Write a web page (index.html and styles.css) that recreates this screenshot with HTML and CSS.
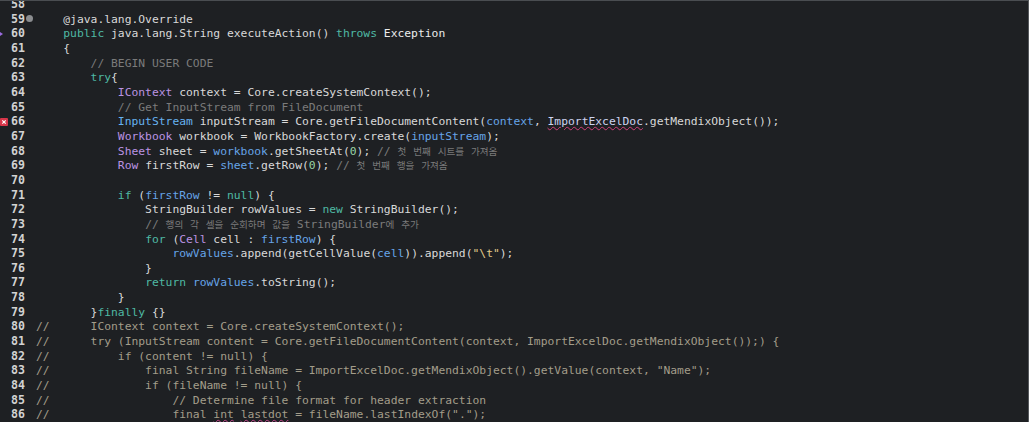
FILE: index.html
```html
<!DOCTYPE html>
<html>
<head>
<meta charset="utf-8">
<meta name="viewport" content="width=device-width, initial-scale=1.0">
<title>ImportExcel.java</title>
<link rel="stylesheet" href="styles.css">
</head>
<body>
  <div class="editor">
    <div class="lines">
      <div class="line"><div class="num">58</div><div class="mark"></div><div class="code"></div></div>
      <div class="line"><div class="num">59</div><div class="mark"><span class="override-dot"></span></div><div class="code">    @java.lang.Override</div></div>
      <div class="line"><div class="num"><span class="arrow"></span>60</div><div class="mark"></div><div class="code">    <span class="kw">public</span> java.lang.String executeAction() <span class="kw">throws</span> <span class="cls">Exception</span></div></div>
      <div class="line"><div class="num">61</div><div class="mark"></div><div class="code">    {</div></div>
      <div class="line"><div class="num">62</div><div class="mark"></div><div class="code">        <span class="cm">// BEGIN USER CODE</span></div></div>
      <div class="line"><div class="num">63</div><div class="mark"></div><div class="code">        <span class="kw">try</span>{</div></div>
      <div class="line"><div class="num">64</div><div class="mark"></div><div class="code">            <span class="iface">IContext</span> context = Core.createSystemContext();</div></div>
      <div class="line"><div class="num">65</div><div class="mark"></div><div class="code">            <span class="cm">// Get InputStream from FileDocument</span></div></div>
      <div class="line"><div class="num"><svg class="err" width="8" height="8" viewBox="0 0 8 8"><rect width="8" height="8" rx="1" fill="#d7364a"/><path d="M2.3 2.3l3.4 3.4M5.7 2.3l-3.4 3.4" stroke="#fff" stroke-width="1.2"/></svg>66</div><div class="mark"></div><div class="code">            <span class="abs">InputStream</span> inputStream = Core.getFileDocumentContent(<span class="var">context</span>, <span class="bad">ImportExcelDoc</span>.getMendixObject());</div></div>
      <div class="line"><div class="num">67</div><div class="mark"></div><div class="code">            <span class="iface">Workbook</span> workbook = WorkbookFactory.create(<span class="var">inputStream</span>);</div></div>
      <div class="line"><div class="num">68</div><div class="mark"></div><div class="code">            <span class="iface">Sheet</span> sheet = <span class="var">workbook</span>.getSheetAt(<span class="nb">0</span>); <span class="cm">// <span class="ko">첫</span> <span class="ko">번째</span> <span class="ko">시트를</span> <span class="ko">가져옴</span></span></div></div>
      <div class="line"><div class="num">69</div><div class="mark"></div><div class="code">            <span class="iface">Row</span> firstRow = <span class="var">sheet</span>.getRow(<span class="nb">0</span>); <span class="cm">// <span class="ko">첫</span> <span class="ko">번째</span> <span class="ko">행을</span> <span class="ko">가져옴</span></span></div></div>
      <div class="line"><div class="num">70</div><div class="mark"></div><div class="code"></div></div>
      <div class="line"><div class="num">71</div><div class="mark"></div><div class="code">            <span class="kw">if</span> (<span class="var">firstRow</span> != <span class="kw">null</span>) {</div></div>
      <div class="line"><div class="num">72</div><div class="mark"></div><div class="code">                StringBuilder rowValues = <span class="kw">new</span> StringBuilder();</div></div>
      <div class="line"><div class="num">73</div><div class="mark"></div><div class="code">                <span class="cm">// <span class="ko">행의</span> <span class="ko">각</span> <span class="ko">셀을</span> <span class="ko">순회하며</span> <span class="ko">값을</span> StringBuilder<span class="ko">에</span> <span class="ko">추가</span></span></div></div>
      <div class="line"><div class="num">74</div><div class="mark"></div><div class="code">                <span class="kw">for</span> (<span class="iface">Cell</span> cell : <span class="var">firstRow</span>) {</div></div>
      <div class="line"><div class="num">75</div><div class="mark"></div><div class="code">                    <span class="var">rowValues</span>.append(getCellValue(<span class="var">cell</span>)).append(<span class="str">"\t"</span>);</div></div>
      <div class="line"><div class="num">76</div><div class="mark"></div><div class="code">                }</div></div>
      <div class="line"><div class="num">77</div><div class="mark"></div><div class="code">                <span class="kw">return</span> <span class="var">rowValues</span>.toString();</div></div>
      <div class="line"><div class="num">78</div><div class="mark"></div><div class="code">            }</div></div>
      <div class="line"><div class="num">79</div><div class="mark"></div><div class="code">        }<span class="kw">finally</span> {}</div></div>
      <div class="line old"><div class="num">80</div><div class="mark"></div><div class="code">//      IContext context = Core.createSystemContext();</div></div>
      <div class="line old"><div class="num">81</div><div class="mark"></div><div class="code">//      try (InputStream content = Core.getFileDocumentContent(context, ImportExcelDoc.getMendixObject());) {</div></div>
      <div class="line old"><div class="num">82</div><div class="mark"></div><div class="code">//          if (content != null) {</div></div>
      <div class="line old"><div class="num">83</div><div class="mark"></div><div class="code">//              final String fileName = ImportExcelDoc.getMendixObject().getValue(context, "Name");</div></div>
      <div class="line old"><div class="num">84</div><div class="mark"></div><div class="code">//              if (fileName != null) {</div></div>
      <div class="line old"><div class="num">85</div><div class="mark"></div><div class="code">//                  // Determine file format for header extraction</div></div>
      <div class="line old"><div class="num">86</div><div class="mark"></div><div class="code">//                  final <span class="warn">int</span> <span class="warn">lastdot</span> = fileName.lastIndexOf(".");</div></div>
    </div>
  </div>
</body>
</html>
```

FILE: styles.css
```css
html, body {
  height: 100%;
  margin: 0;
  padding: 0;
  overflow: hidden;
  background: #1e2023;
}

.editor {
  box-sizing: border-box;
  height: 100%;
  overflow: hidden;
  border-top: 1px solid #4a4d51;
  border-right: 1px solid #55585c;
  background: #1e2023;
  font-family: "DejaVu Sans Mono", "Liberation Mono", "Noto Sans CJK KR", monospace;
  font-size: 11.33px;
  color: #d9d9d9;
}

.lines {
  margin-top: -4px;
}

.line {
  display: flex;
  height: 14.667px;
  line-height: 14.667px;
}

.num {
  width: 25px;
  display: flex;
  justify-content: space-between;
  align-items: center;
  font-weight: bold;
  font-size: 11.6px;
  color: #d2d2d2;
}

.num::before {
  content: "";
}

.num .arrow,
.num .err {
  margin-right: auto;
}

.arrow {
  width: 0;
  height: 0;
  border-top: 2.5px solid transparent;
  border-bottom: 2.5px solid transparent;
  border-left: 3px solid #9b6be0;
}

.err {
  display: block;
}

.mark {
  width: 11px;
  display: flex;
  align-items: center;
}

.override-dot {
  width: 7px;
  height: 7px;
  margin-left: 1px;
  border-radius: 50%;
  background: #8b8d90;
}

.code {
  white-space: pre;
}

.kw { color: #4fb9a3; }
.cm { color: #7b7b7b; }
.iface { color: #bb93e2; }
.abs { color: #66b2f0; }
.var { color: #66a4e8; }
.nb { color: #98d3a4; }
.str { color: #e3cd8c; }
.cls { color: #ececec; }

.ko {
  font-family: "Noto Sans CJK KR", sans-serif;
  font-size: 9.6px;
  font-weight: normal;
}

.bad {
  color: #cdd3f0;
  text-decoration: underline wavy #d2407c;
  text-decoration-thickness: 1px;
  text-underline-offset: 1px;
}

.old .code {
  color: #a39d8a;
}

.warn {
  text-decoration: underline wavy #c4478c;
  text-decoration-thickness: 1px;
  text-underline-offset: 1px;
}
```
